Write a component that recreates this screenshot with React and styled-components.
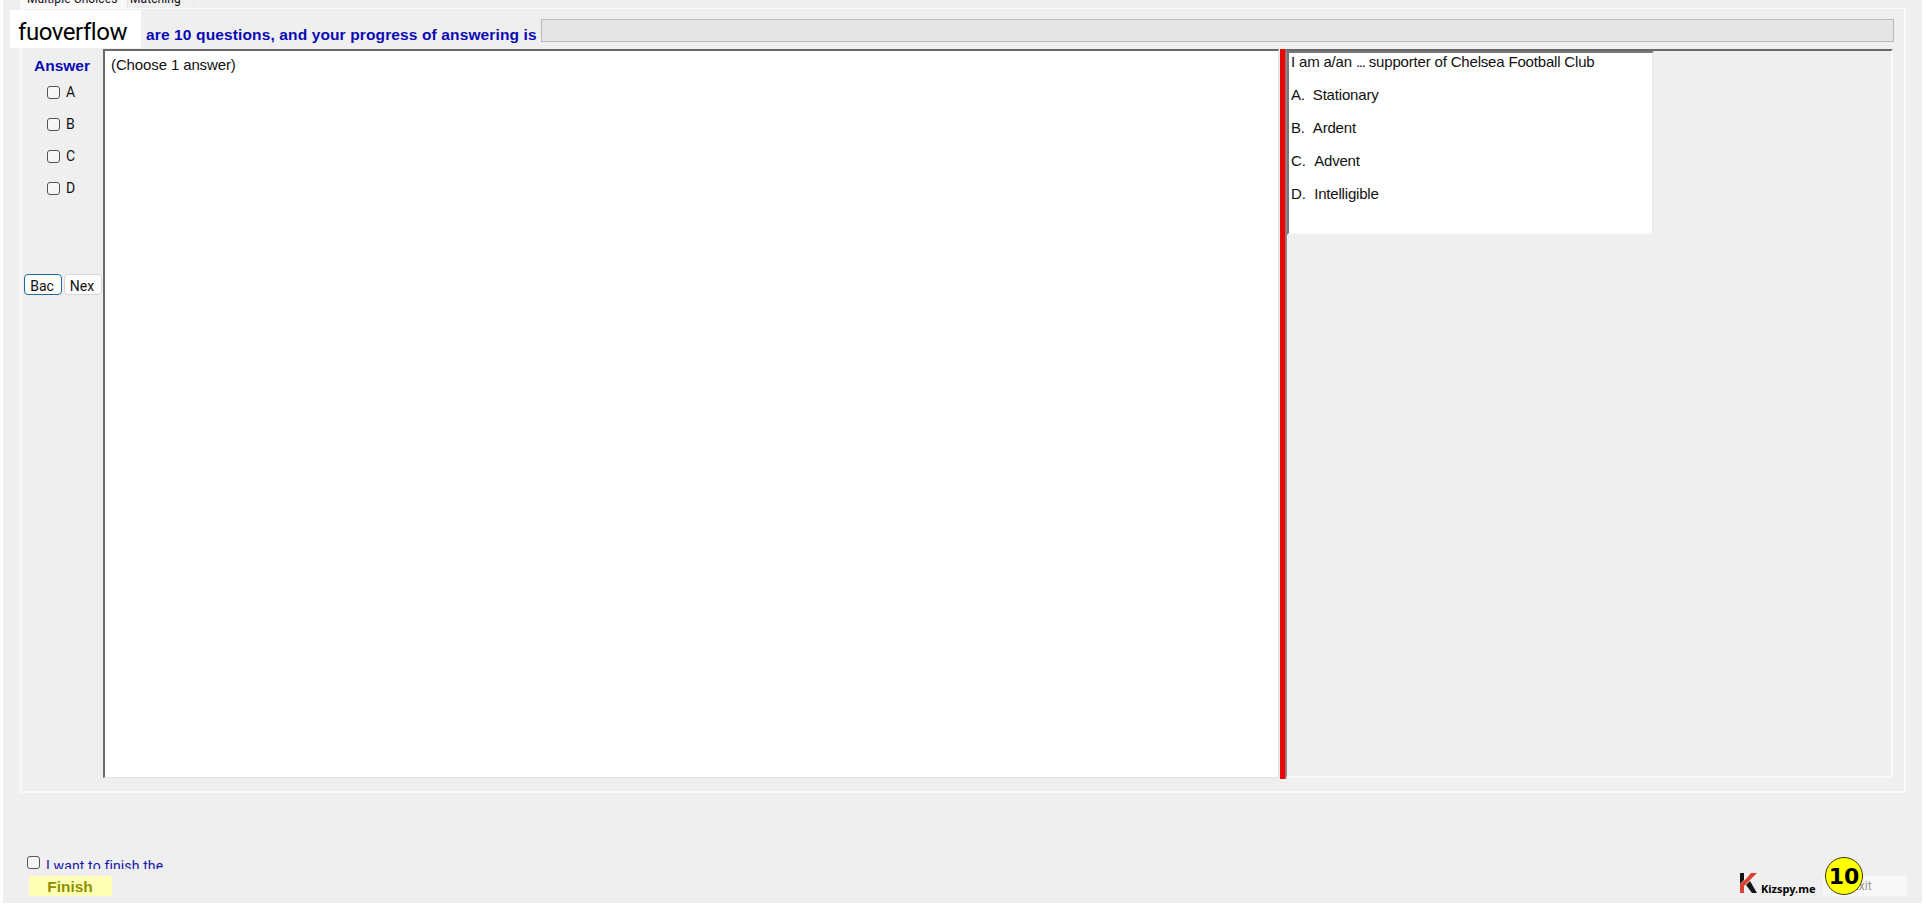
import React from "react";
import styled, { createGlobalStyle } from "styled-components";

const GlobalStyle = createGlobalStyle`
  * {
    box-sizing: border-box;
  }
  body {
    margin: 0;
    background: #fff;
    overflow: hidden;
  }
`;

const answers = ["A", "B", "C", "D"];

const options = [
  { letter: "A.", text: "Stationary", gap: 8 },
  { letter: "B.", text: "Ardent", gap: 8 },
  { letter: "C.", text: "Advent", gap: 8.5 },
  { letter: "D.", text: "Intelligible", gap: 8.5 },
];

const App = () => {
  return (
    <>
      <GlobalStyle />
      <StyledWindow>
        <Tabs>
          <Tab $active $width={108}>
            <Label $width={92}>Multiple Choices</Label>
          </Tab>
          <Tab $width={66}>
            <Label $width={52}>Matching</Label>
          </Tab>
        </Tabs>
        <TabPage>
          <Header>
            <Brand>fuoverflow</Brand>
            <Progress>
              <span>are 10 questions, and your progress of answering is</span>
              <div className="bar" />
            </Progress>
          </Header>
          <Body>
            <Sidebar>
              <h2>Answer</h2>
              {answers.map((letter) => (
                <CheckRow key={letter}>
                  <CheckBox />
                  {letter}
                </CheckRow>
              ))}
              <NavButtons>
                <NavButton $focused>Bac</NavButton>
                <NavButton>Nex</NavButton>
              </NavButtons>
            </Sidebar>
            <AnswerPane>(Choose 1 answer)</AnswerPane>
            <Splitter />
            <QuestionPane>
              <QuestionBox>
                <p>
                  I am a/an <Dots>...</Dots> supporter of Chelsea Football Club
                </p>
                {options.map(({ letter, text, gap }) => (
                  <Option key={letter} $gap={gap}>
                    <span>{letter}</span>
                    {text}
                  </Option>
                ))}
              </QuestionBox>
            </QuestionPane>
          </Body>
        </TabPage>
        <Footer>
          <FinishArea>
            <FinishCheck>
              <CheckBox />
              <span>I want to finish the</span>
            </FinishCheck>
            <FinishButton>Finish</FinishButton>
          </FinishArea>
          <ExitArea>
            <Logo>
              <svg width="19" height="22" viewBox="0 0 19 22">
                <path d="M1 1h4v7l-4 4z" fill="#151515" />
                <path d="M12 1h6L5 14v7H1v-9l6-5z" fill="#e0402f" />
                <path d="M11 9l7 12h-5L7 13z" fill="#151515" />
              </svg>
              <span>Kizspy.me</span>
            </Logo>
            <ExitButton>
              Exit
              <Counter>10</Counter>
            </ExitButton>
          </ExitArea>
        </Footer>
      </StyledWindow>
    </>
  );
};

const StyledWindow = styled.main`
  width: 1919px;
  height: 903px;
  margin-left: 3px;
  padding: 0 15px 0 7px;
  display: flex;
  flex-direction: column;
  background: #efefef;
  color: #111;
  font-family: "Liberation Sans", Arial, sans-serif;
  overflow: hidden;
`;

const Tabs = styled.div`
  height: 8px;
  padding-left: 10px;
  display: flex;
  overflow: hidden;
`;

const Tab = styled.div`
  width: ${({ $width }) => $width}px;
  height: 8px;
  padding-left: ${({ $active }) => ($active ? 7 : 2)}px;
  background: ${({ $active }) => ($active ? "#f9f9f9" : "#f0f0f0")};
  border-right: 1px solid #e6e6e6;
`;

const Label = styled.span`
  display: block;
  width: ${({ $width }) => $width}px;
  margin-top: -9px;
  font: 12px/16px Roboto, sans-serif;
  letter-spacing: 0.1px;
  white-space: nowrap;
`;

const TabPage = styled.section`
  width: 1886px;
  height: 785px;
  margin-left: 10px;
  border: 2px solid #f9f9f9;
  border-top-width: 1px;
`;

const Header = styled.header`
  height: 40px;
  display: flex;
  align-items: flex-start;
`;

const Brand = styled.div`
  width: 131px;
  height: 38px;
  margin: 1px 0 0 -12px;
  padding-left: 8px;
  background: #fff;
  color: #000;
  font: 24px/44px Roboto, sans-serif;
  letter-spacing: -0.45px;
`;

const Progress = styled.div`
  display: flex;
  span {
    width: 400px;
    padding-left: 5px;
    margin-top: 17px;
    color: #0a0ab4;
    font-size: 15.5px;
    line-height: 18px;
    font-weight: bold;
    letter-spacing: 0.13px;
    white-space: nowrap;
  }
  .bar {
    width: 1353px;
    height: 23px;
    margin-top: 10px;
    background: #e5e5e5;
    border: 1px solid #bababa;
  }
`;

const Body = styled.div`
  height: 730px;
  display: flex;
`;

const Sidebar = styled.aside`
  width: 81px;
  h2 {
    height: 26px;
    margin: 0 0 0 12px;
    color: #0a0ab4;
    font-size: 15.5px;
    line-height: 34px;
  }
`;

const CheckRow = styled.label`
  height: 32px;
  padding: 2px 0 0 25px;
  display: flex;
  align-items: center;
  gap: 6px;
  font: 14px Roboto, sans-serif;
`;

const CheckBox = styled.i`
  width: 13px;
  height: 13px;
  flex: none;
  background: #f6f6f6;
  border: 1px solid #555;
  border-radius: 3px;
`;

const NavButtons = styled.div`
  margin: 71px 0 0 2px;
  display: flex;
  gap: 2px;
`;

const NavButton = styled.button`
  width: 38px;
  height: 21px;
  padding: 2px 2px 0 0;
  background: #fdfdfd;
  border: 1px solid ${({ $focused }) => ($focused ? "#1f6a9c" : "#d5d5d5")};
  border-radius: 4px;
  color: #111;
  font: 14px Roboto, sans-serif;
`;

const AnswerPane = styled.div`
  width: 1176px;
  height: 729px;
  padding: 5px 6px;
  background: #fff;
  border: solid;
  border-width: 2px 1px 1px 2px;
  border-color: #6a6a6a #e3e3e3 #e3e3e3 #6a6a6a;
  font-size: 15px;
  line-height: 18px;
  letter-spacing: -0.12px;
`;

const Splitter = styled.div`
  width: 6px;
  height: 730px;
  margin-left: 1px;
  background: #e60808;
  border-right: 1px solid #a66;
`;

const QuestionPane = styled.div`
  width: 607px;
  height: 729px;
  border: solid;
  border-width: 2px 2px 2px 1px;
  border-color: #6a6a6a #f9f9f9 #f9f9f9 #8a8a8a;
`;

const QuestionBox = styled.div`
  width: 367px;
  height: 184px;
  padding-left: 2px;
  background: #fff;
  border: solid;
  border-width: 2px;
  border-color: #777 #e9e9e9 #f4f4f4 #777;
  font-size: 15px;
  letter-spacing: -0.18px;
  p {
    margin: 0 0 15px;
    line-height: 18px;
    white-space: nowrap;
  }
`;

const Dots = styled.span`
  letter-spacing: -1.2px;
`;

const Option = styled.p`
  span {
    margin-right: ${({ $gap }) => $gap}px;
  }
`;

const Footer = styled.footer`
  height: 110px;
  display: flex;
  justify-content: space-between;
`;

const FinishArea = styled.div`
  padding: 63px 0 0 17px;
`;

const FinishCheck = styled.label`
  height: 13px;
  display: flex;
  gap: 6px;
  overflow: hidden;
  color: #1515a8;
  font: 14px/21px Roboto, sans-serif;
  letter-spacing: 0.13px;
`;

const FinishButton = styled.button`
  display: block;
  width: 83px;
  height: 20px;
  margin: 7px 0 0 2px;
  padding: 2px 1px 0 0;
  background: #ffffb5;
  border: none;
  color: #8f8f00;
  font: bold 15.5px/18px "Liberation Sans", Arial, sans-serif;
`;

const ExitArea = styled.div`
  padding-top: 79px;
  display: flex;
  align-items: flex-start;
`;

const Logo = styled.div`
  width: 84px;
  display: flex;
  gap: 3px;
  color: #000;
  span {
    padding-top: 8px;
    font: bold 11px/18px "Noto Sans", sans-serif;
  }
`;

const ExitButton = styled.div`
  position: relative;
  width: 84px;
  height: 20px;
  margin-top: 4px;
  padding-left: 29px;
  background: #f8f8f8;
  color: #999;
  font: 12px/21px Roboto, sans-serif;
`;

const Counter = styled.div`
  position: absolute;
  left: 2px;
  top: -19px;
  width: 38px;
  height: 38px;
  background: #ff0;
  border: 1px solid #3a3a10;
  border-radius: 50%;
  color: #000;
  font: bold 22px/37px "DejaVu Sans", sans-serif;
  text-align: center;
`;

export default App;
